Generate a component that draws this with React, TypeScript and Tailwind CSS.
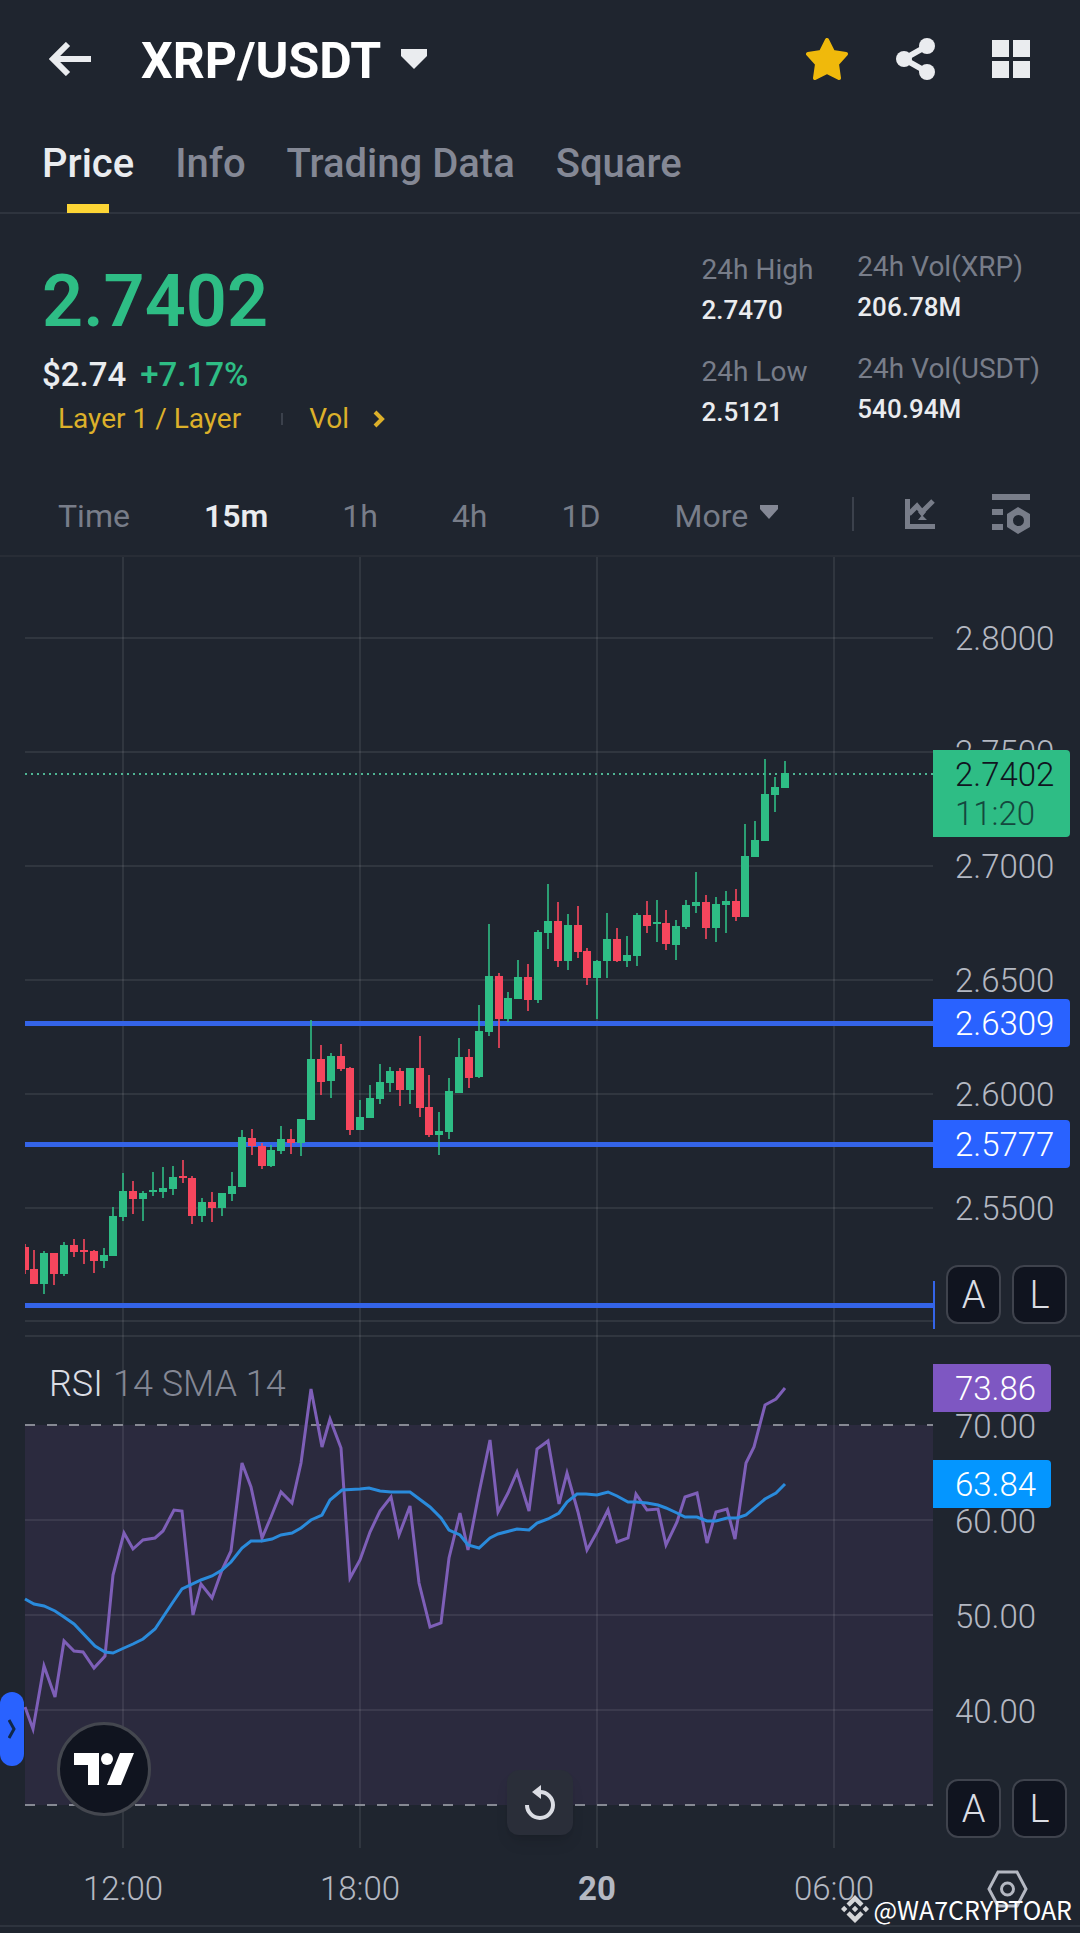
import React from "react";

type Candle = [number, number, number, number, "u" | "d"];

// high, body top, body bottom, low, direction (chart units)
const candles: Candle[] = [
  [1244, 1247, 1270, 1274, "d"],
  [1250, 1269, 1284, 1284, "d"],
  [1251, 1253, 1284, 1294, "u"],
  [1253, 1253, 1274, 1285, "d"],
  [1242, 1245, 1274, 1276, "u"],
  [1239, 1245, 1252, 1257, "d"],
  [1239, 1250, 1251, 1264, "d"],
  [1250, 1251, 1261, 1273, "d"],
  [1248, 1255, 1261, 1268, "u"],
  [1207, 1216, 1256, 1256, "u"],
  [1173, 1191, 1217, 1221, "u"],
  [1181, 1191, 1199, 1214, "d"],
  [1191, 1193, 1199, 1221, "u"],
  [1172, 1190, 1192, 1196, "u"],
  [1167, 1188, 1192, 1198, "u"],
  [1166, 1177, 1189, 1195, "u"],
  [1160, 1176, 1178, 1183, "d"],
  [1176, 1178, 1216, 1224, "d"],
  [1198, 1202, 1216, 1222, "u"],
  [1192, 1202, 1208, 1222, "d"],
  [1193, 1193, 1208, 1216, "u"],
  [1172, 1186, 1194, 1201, "u"],
  [1130, 1137, 1187, 1187, "u"],
  [1129, 1138, 1146, 1155, "d"],
  [1143, 1146, 1166, 1169, "d"],
  [1145, 1150, 1166, 1167, "u"],
  [1126, 1139, 1151, 1154, "u"],
  [1129, 1139, 1143, 1154, "d"],
  [1119, 1119, 1143, 1156, "u"],
  [1020, 1059, 1120, 1120, "u"],
  [1045, 1059, 1082, 1095, "d"],
  [1053, 1056, 1081, 1098, "u"],
  [1044, 1056, 1069, 1071, "d"],
  [1067, 1068, 1130, 1135, "d"],
  [1100, 1117, 1130, 1130, "u"],
  [1085, 1098, 1118, 1118, "u"],
  [1064, 1082, 1099, 1104, "u"],
  [1067, 1071, 1083, 1092, "u"],
  [1068, 1071, 1090, 1106, "d"],
  [1068, 1068, 1090, 1104, "u"],
  [1036, 1068, 1108, 1117, "d"],
  [1075, 1107, 1135, 1137, "d"],
  [1112, 1131, 1135, 1155, "u"],
  [1078, 1091, 1132, 1139, "u"],
  [1038, 1057, 1093, 1093, "u"],
  [1049, 1057, 1078, 1088, "d"],
  [1005, 1031, 1077, 1078, "u"],
  [924, 976, 1032, 1036, "u"],
  [973, 976, 1019, 1048, "d"],
  [992, 998, 1019, 1022, "u"],
  [960, 977, 999, 999, "u"],
  [964, 977, 1000, 1011, "d"],
  [930, 932, 1000, 1003, "u"],
  [884, 921, 933, 949, "u"],
  [902, 921, 961, 967, "d"],
  [914, 925, 961, 970, "u"],
  [906, 925, 952, 958, "d"],
  [948, 951, 978, 985, "d"],
  [960, 961, 978, 1019, "u"],
  [913, 939, 961, 978, "u"],
  [928, 939, 961, 962, "d"],
  [936, 955, 961, 967, "u"],
  [913, 915, 956, 966, "u"],
  [901, 915, 926, 933, "d"],
  [900, 922, 923, 942, "u"],
  [910, 923, 944, 950, "d"],
  [920, 926, 945, 960, "u"],
  [900, 905, 927, 929, "u"],
  [872, 902, 906, 913, "u"],
  [895, 902, 928, 939, "d"],
  [897, 904, 928, 942, "u"],
  [891, 901, 905, 933, "u"],
  [889, 901, 917, 921, "d"],
  [824, 856, 917, 917, "u"],
  [821, 840, 857, 857, "u"],
  [759, 794, 841, 841, "u"],
  [777, 787, 795, 812, "u"],
  [761, 773, 788, 788, "u"],
];

const rsiPoints =
  "25,1707 33,1729 44,1666 55,1697 64,1641 74,1651 83,1652 94,1668 105,1656 113,1575 124,1533 133,1549 143,1540 155,1538 163,1531 174,1510 182,1511 193,1615 201,1584 212,1598 222,1570 231,1551 242,1463 251,1487 262,1538 271,1517 281,1492 292,1503 301,1463 311,1389 322,1447 330,1419 341,1448 350,1578 360,1560 370,1532 380,1511 391,1497 399,1535 410,1506 419,1583 430,1627 441,1623 449,1558 460,1513 468,1550 479,1493 490,1440 498,1512 508,1493 517,1472 529,1511 537,1449 548,1441 559,1504 567,1473 578,1512 587,1550 597,1532 608,1510 617,1542 628,1538 636,1494 647,1510 658,1509 666,1545 677,1522 685,1497 697,1493 707,1543 716,1512 727,1509 735,1539 746,1463 754,1447 765,1405 776,1399 785,1388";

const smaPoints =
  "25,1599 34,1604 44,1606 55,1611 64,1617 74,1624 95,1646 105,1652 113,1653 124,1648 133,1644 143,1639 155,1629 173,1602 182,1589 201,1580 212,1576 222,1570 231,1562 242,1548 251,1541 262,1541 272,1539 281,1535 292,1533 301,1528 311,1520 322,1515 330,1500 342,1490 360,1489 369,1488 380,1491 391,1492 410,1492 430,1507 441,1518 449,1530 460,1535 468,1545 479,1548 490,1538 498,1534 517,1529 529,1530 537,1523 548,1519 559,1513 567,1502 577,1494 586,1494 597,1495 608,1492 617,1496 628,1502 636,1502 647,1503 658,1505 666,1508 677,1513 685,1517 697,1517 707,1521 716,1521 727,1518 737,1518 746,1515 765,1499 776,1493 785,1484";

const gridX = [123, 360, 597, 834];
const priceLabels: [string, number][] = [
  ["2.8000", 638],
  ["2.7500", 752],
  ["2.7000", 866],
  ["2.6500", 980],
  ["2.6000", 1094],
  ["2.5500", 1208],
];
const rsiLabels: [string, number][] = [
  ["70.00", 1425],
  ["60.00", 1520],
  ["50.00", 1615],
  ["40.00", 1710],
];

const tabs = ["Price", "Info", "Trading Data", "Square"];
const intervals = ["Time", "15m", "1h", "4h", "1D"];

function Header() {
  return (
    <header className="flex h-[118px] items-center justify-between pl-[49px] pr-[50px]">
      <div className="flex items-center gap-[50px]">
        <button aria-label="Back">
          <svg width="42" height="34" viewBox="0 0 42 34" fill="none" stroke="#eaecef" strokeWidth="6">
            <path d="M42 17H5M19 2L4 17l15 15" />
          </svg>
        </button>
        <button className="flex items-center gap-5 pt-1 text-[50px] font-bold leading-none text-white">
          XRP/USDT
          <svg width="26" height="20" viewBox="0 0 26 20" fill="#eaecef" className="mb-1">
            <path d="M0 0h26v7L13 20 0 7z" />
          </svg>
        </button>
      </div>
      <div className="flex items-center gap-12">
        <button aria-label="Favorite">
          <svg width="42" height="42" viewBox="0 0 42 42" fill="#f0b90b" stroke="#f0b90b" strokeWidth="4" strokeLinejoin="round">
            <path d="M21 2l6 12 13 2-9 10 2 14-12-6-12 6 2-14-9-10 13-2z" />
          </svg>
        </button>
        <button aria-label="Share">
          <svg width="40" height="42" viewBox="0 0 40 42" fill="#eaecef">
            <path d="M8 21L31 8M8 21l23 13" stroke="#eaecef" strokeWidth="6" />
            <circle cx="8" cy="21" r="8" />
            <circle cx="31" cy="8" r="8" />
            <circle cx="31" cy="34" r="8" />
          </svg>
        </button>
        <button aria-label="Layout" className="pl-2">
          <svg width="38" height="38" viewBox="0 0 38 38" fill="#eaecef">
            <path d="M0 0h17v17H0zM21 0h17v17H21zM0 21h17v17H0zM21 21h17v17H21z" />
          </svg>
        </button>
      </div>
    </header>
  );
}

function Tabs() {
  return (
    <nav className="flex h-24 gap-[41px] border-b-2 border-[#2e343e] pl-[42px] text-[40px] font-medium leading-[92px] text-[#848895]">
      {tabs.map((tab, i) =>
        i === 0 ? (
          <a key={tab} href="#price" className="relative text-[#eaecef]">
            {tab}
            <span className="absolute -bottom-px left-1/2 h-[9px] w-[42px] -translate-x-1/2 bg-[#fcd535]" />
          </a>
        ) : (
          <a key={tab} href="#tab">
            {tab}
          </a>
        )
      )}
    </nav>
  );
}

function Stat({ label, value }: { label: string; value: string }) {
  return (
    <div className="leading-10">
      <dt className="text-[28px] text-[#787d89]">{label}</dt>
      <dd className="text-[26px] font-medium text-[#eaecef]">{value}</dd>
    </div>
  );
}

function Summary() {
  return (
    <section className="flex h-[246px] justify-between pl-[42px] pr-10">
      <div className="pt-11">
        <p className="text-[72px] font-semibold leading-[88px] text-[#2ebd85]">2.7402</p>
        <p className="mt-[7px] flex gap-[14px] text-[33px] font-medium leading-[44px]">
          <span className="text-[#eaecef]">$2.74</span>
          <span className="text-[#2ebd85]">+7.17%</span>
        </p>
        <div className="flex items-center pl-4 text-[28px] leading-[44px] text-[#dcb02a]">
          <a href="#layer">Layer 1 / Layer</a>
          <span className="ml-10 mr-[26px] h-3 w-[2px] bg-[#3b414c]" />
          <a href="#vol" className="flex items-center gap-6">
            Vol
            <svg width="12" height="18" viewBox="0 0 12 18" fill="none" stroke="#dcb02a" strokeWidth="4">
              <path d="M2 2l7 7-7 7" />
            </svg>
          </a>
        </div>
      </div>
      <div className="flex gap-11 pt-[33px]">
        <dl className="flex flex-col gap-[22px] pt-[3px]">
          <Stat label="24h High" value="2.7470" />
          <Stat label="24h Low" value="2.5121" />
        </dl>
        <dl className="flex flex-col gap-[22px]">
          <Stat label="24h Vol(XRP)" value="206.78M" />
          <Stat label="24h Vol(USDT)" value="540.94M" />
        </dl>
      </div>
    </section>
  );
}

function IntervalBar() {
  return (
    <div className="flex h-[97px] items-center justify-between border-b-2 border-[#282d36] pl-[58px] pr-[50px] pt-4 text-[32px] text-[#787d89]">
      <div className="flex items-center gap-[74px]">
        {intervals.map((name) => (
          <button key={name} className={name === "15m" ? "font-semibold text-[#eaecef]" : ""}>
            {name}
          </button>
        ))}
        <button className="flex items-center gap-3">
          More
          <svg width="18" height="14" viewBox="0 0 18 14" fill="#848895" className="-mt-2">
            <path d="M0 0h18v4l-9 10L0 4z" />
          </svg>
        </button>
      </div>
      <div className="flex items-center pb-1">
        <span className="mr-[51px] h-[34px] w-[2px] bg-[#3b414c]" />
        <button aria-label="Indicators" className="mr-[57px]">
          <svg width="30" height="32" viewBox="0 0 30 32" fill="#787d89">
            <path d="M0 1h5v25h25v5H0z" />
            <path d="M4 16l8-8 5 6L28 3" fill="none" stroke="#787d89" strokeWidth="5" />
            <path d="M13 22l4-5 5 5zM13 14h8l-4 5z" />
          </svg>
        </button>
        <button aria-label="Chart settings">
          <svg width="38" height="40" viewBox="0 0 38 40" fill="#787d89">
            <path d="M0 0h38v6H0zM0 15h11v6H0zM0 30h11v6H0z" />
            <path fillRule="evenodd" d="M26 13l12 7v13l-12 7-11-7V20zM26.500 21a5.500 5.500 0 100 11 5.500 5.500 0 000-11z" />
          </svg>
        </button>
      </div>
    </div>
  );
}

function ScaleButtons() {
  return (
    <div className="absolute bottom-[13px] right-[13px] flex gap-[11px]">
      {["A", "L"].map((name) => (
        <button
          key={name}
          className="h-[59px] w-[55px] rounded-xl border-2 border-[#3f434d] bg-[#10141f] text-[38px] font-light leading-none text-[#dbdde4]"
        >
          {name}
        </button>
      ))}
    </div>
  );
}

function PricePane() {
  return (
    <div className="relative">
      <svg viewBox="0 557 1080 780" className="block h-auto w-full">
        <g stroke="#ffffff" strokeOpacity="0.08" strokeWidth="2">
          {gridX.map((x) => (
            <path key={x} d={`M${x} 557v780`} />
          ))}
          {priceLabels.map(([label, y]) => (
            <path key={label} d={`M25 ${y}h908`} />
          ))}
          <path d="M25 1321h908M25 1336h1055" />
        </g>
        <path d="M25 1023.500h908M25 1144.500h908M25 1305.500h908" stroke="#3464e8" strokeWidth="5" />
        <path d="M934 1281v48" stroke="#3464e8" strokeWidth="2" />
        <path d="M25 774h908" stroke="#4fb594" strokeWidth="2" strokeDasharray="2 4" />
        <clipPath id="plot">
          <path d="M25 557h908v780H25z" />
        </clipPath>
        <g clipPath="url(#plot)">
          {candles.map(([high, top, bottom, low, dir], i) => {
            const x = Math.round(24.6 + i * 9.875);
            const color = dir === "u" ? "#2ebd85" : "#f6465d";
            return (
              <g key={i} fill={color}>
                <rect x={x - 1} y={high} width="2" height={low - high} opacity="0.8" />
                <rect x={x - 4} y={top} width="8" height={Math.max(bottom - top, 2)} />
              </g>
            );
          })}
        </g>
        <g fontSize="33" fontWeight="300" fill="#b4b8c2">
          {priceLabels.map(([label, y]) => (
            <text key={label} x="955" y={y + 12}>
              {label}
            </text>
          ))}
          <path d="M933 750h133a4 4 0 014 4v79a4 4 0 01-4 4H933z" fill="#2ebd85" />
          <text x="955" y="786" fill="#10141f">2.7402</text>
          <text x="955" y="825" fill="#14483e">11:20</text>
          <path d="M933 999h133a4 4 0 014 4v40a4 4 0 01-4 4H933zM933 1120h133a4 4 0 014 4v40a4 4 0 01-4 4H933z" fill="#2962ff" />
          <text x="955" y="1035" fill="#ffffff">2.6309</text>
          <text x="955" y="1156" fill="#ffffff">2.5777</text>
        </g>
      </svg>
      <ScaleButtons />
    </div>
  );
}

function RsiPane() {
  return (
    <div className="relative">
      <svg viewBox="0 1337 1080 511" className="block h-auto w-full">
        <rect x="25" y="1425" width="908" height="380" fill="#2b2a3e" />
        <g stroke="#ffffff" strokeOpacity="0.08" strokeWidth="2">
          {gridX.map((x) => (
            <path key={x} d={`M${x} 1337v511`} />
          ))}
          <path d="M25 1520h908M25 1615h908M25 1710h908" />
        </g>
        <path d="M25 1425h908M25 1805h908" stroke="#868993" strokeWidth="2" strokeDasharray="10 12" />
        <polyline points={rsiPoints} fill="none" stroke="#7e5fb8" strokeWidth="3" />
        <polyline points={smaPoints} fill="none" stroke="#2a8bdc" strokeWidth="3" />
        <text x="49" y="1396" fontSize="36" fontWeight="300" fill="#dbdde4">
          RSI
        </text>
        <text x="113" y="1396" fontSize="36" fontWeight="300" fill="#848895">
          14 SMA 14
        </text>
        <g fontSize="33" fontWeight="300" fill="#b4b8c2">
          {rsiLabels.map(([label, y]) => (
            <text key={label} x="955" y={y + 13}>
              {label}
            </text>
          ))}
          <path d="M933 1364h114a4 4 0 014 4v40a4 4 0 01-4 4H933z" fill="#7e57c2" />
          <path d="M933 1460h114a4 4 0 014 4v40a4 4 0 01-4 4H933z" fill="#0496ff" />
          <text x="955" y="1400" fill="#ffffff">73.86</text>
          <text x="955" y="1496" fill="#ffffff">63.84</text>
        </g>
      </svg>
      <button aria-label="Expand toolbar" className="absolute bottom-[82px] left-0 flex h-[74px] w-6 items-center justify-center rounded-full bg-[#2962ff]">
        <svg width="8" height="20" viewBox="0 0 8 20" fill="none" stroke="#10284a" strokeWidth="3">
          <path d="M1 1l5 9-5 9" />
        </svg>
      </button>
      <a
        href="#tradingview"
        aria-label="TradingView"
        className="absolute bottom-8 left-[57px] flex h-[94px] w-[94px] items-center justify-center rounded-full border-[3px] border-[#44474f] bg-[#10141f]"
      >
        <svg width="60" height="32" viewBox="0 0 60 32" fill="#ffffff">
          <path d="M0 0h25v32H14V12H0zM46 0h14L47 32H33z" />
          <circle cx="33" cy="6" r="6" />
        </svg>
      </a>
      <button
        aria-label="Reset chart"
        className="absolute bottom-[13px] left-1/2 flex h-[65px] w-[66px] -translate-x-1/2 items-center justify-center rounded-xl bg-[#2a2e39] shadow-lg"
      >
        <svg width="32" height="36" viewBox="0 0 32 36" fill="none" stroke="#dbdde4" strokeWidth="4">
          <path d="M3 20a13 13 0 1013-13h-5" />
          <path d="M17 0v14L8 7z" fill="#dbdde4" stroke="none" />
        </svg>
      </button>
      <div className="absolute -bottom-[3px] right-0">
        <ScaleButtons />
      </div>
    </div>
  );
}

function TimeAxis() {
  return (
    <div className="relative border-b-2 border-[#2e343e]">
      <svg viewBox="0 1848 1080 77" className="block h-auto w-full">
        <g fontSize="33" fontWeight="300" fill="#b4b8c2" textAnchor="middle">
          <text x="123" y="1900">12:00</text>
          <text x="360" y="1900">18:00</text>
          <text x="597" y="1900" fontWeight="700">20</text>
          <text x="834" y="1900">06:00</text>
        </g>
      </svg>
      <button aria-label="Axis settings" className="absolute right-[52px] top-[22px]">
        <svg width="41" height="38" viewBox="0 0 41 38" fill="none" stroke="#b4b8c2" strokeWidth="3">
          <path d="M11 2h19l9 17-9 17H11L2 19z" />
          <circle cx="20.500" cy="19" r="6" />
        </svg>
      </button>
    </div>
  );
}

function Watermark() {
  return (
    <div className="absolute bottom-[6px] right-2 flex items-center gap-1 font-['Noto_Sans_CJK_SC',sans-serif] text-[25px] leading-9 text-white">
      <svg width="28" height="28" viewBox="0 0 28 28" fill="#d5d6d8">
        <path d="M14 0l8.500 8.500-3.200 3.200L14 6.400l-5.300 5.300-3.200-3.200zM14 28l8.500-8.500-3.200-3.200L14 21.600l-5.300-5.300-3.200 3.200zM3.200 10.800L6.400 14l-3.200 3.200L0 14zM24.800 10.800L28 14l-3.200 3.200-3.200-3.200zM14 10.800l3.200 3.200-3.200 3.200-3.200-3.200z" />
      </svg>
      @WA7CRYPTOAR
    </div>
  );
}

function App() {
  return (
    <div className="relative min-h-screen bg-[#1f252f] pb-1.5 font-['Roboto',sans-serif]">
      <Header />
      <Tabs />
      <Summary />
      <IntervalBar />
      <PricePane />
      <RsiPane />
      <TimeAxis />
      <Watermark />
    </div>
  );
}

export default App;
